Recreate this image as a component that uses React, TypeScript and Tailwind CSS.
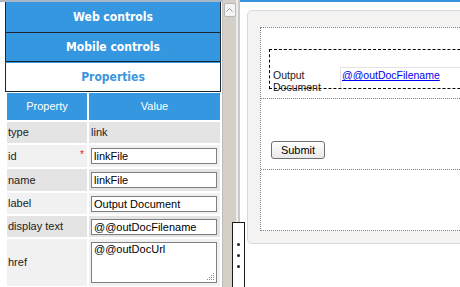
import type { ReactNode } from "react";

function Field({ value }: { value: string }) {
  return (
    <div className="h-[16px] w-[126px] border border-[#7f7f7f] bg-white pl-[2px] text-[11px] leading-[14px] text-black">
      {value}
    </div>
  );
}

function Row({
  label,
  h,
  light,
  req,
  children,
}: {
  label: string;
  h: string;
  light: boolean;
  req?: boolean;
  children: ReactNode;
}) {
  const bg = light ? "bg-[#f1f1f1]" : "bg-[#e4e4e4]";
  return (
    <>
      <div className={`${h} ${bg} relative flex items-center pl-[1px] text-[11px] text-[#222]`}>
        {label}
        {req && <span className="absolute right-[3px] top-[5px] text-[10px] leading-none text-[#e02020]">*</span>}
      </div>
      <div className={`${h} ${bg} flex items-center pl-[2px] text-[11px] text-[#222]`}>{children}</div>
    </>
  );
}

export default function App() {
  return (
    <div
      className="relative flex h-[287px] w-[460px] overflow-hidden bg-white"
      style={{ fontFamily: '"Liberation Sans", Arial, sans-serif' }}
    >
      {/* left: accordion + property grid */}
      <div className="flex w-[222px] shrink-0 flex-col">
        <div className="h-[2px] bg-[#a9b6c3]" />
        <div className="ml-[5px] w-[216px]" style={{ fontFamily: '"DejaVu Sans Condensed", "DejaVu Sans", sans-serif' }}>
          <div className="flex h-[31px] items-center justify-center border-x border-b border-[#1d2731] bg-[#3597e0] text-[12px] font-bold text-white">
            Web controls
          </div>
          <div className="flex h-[29px] items-center justify-center border-x border-b border-[#1d2731] bg-[#3597e0] text-[12px] font-bold text-white">
            Mobile controls
          </div>
          <div className="flex h-[30px] items-center justify-center border-x border-b border-t border-[#1d2731] border-t-[#3597e0] bg-white text-[12px] font-bold text-[#3a95dd]">
            Properties
          </div>
        </div>

        <div className="ml-[7px] mt-[1px] grid w-[213px] grid-cols-[80px_131px] gap-[2px]">
          <div className="flex h-[27px] items-center justify-center bg-[#3597e0] text-[11px] text-white">Property</div>
          <div className="flex h-[27px] items-center justify-center bg-[#3597e0] text-[11px] text-white">Value</div>

          <Row label="type" h="h-[21px]" light={false}>
            link
          </Row>
          <Row label="id" h="h-[22px]" light req>
            <Field value="linkFile" />
          </Row>
          <Row label="name" h="h-[22px]" light={false}>
            <Field value="linkFile" />
          </Row>
          <Row label="label" h="h-[21px]" light>
            <Field value="Output Document" />
          </Row>
          <Row label="display text" h="h-[21px]" light={false}>
            <Field value="@@outDocFilename" />
          </Row>
          <Row label="href" h="h-[47px]" light>
            <div className="relative h-[41px] w-[126px] border border-[#7f7f7f] bg-white pl-[2px] text-[11px] leading-[13px] text-black">
              @@outDocUrl
              <svg className="absolute bottom-[1px] right-[1px]" width="8" height="8" viewBox="0 0 8 8">
                <g fill="#8a8a8a">
                  <rect x="6" y="0" width="1" height="1" />
                  <rect x="4" y="2" width="1" height="1" />
                  <rect x="6" y="2" width="1" height="1" />
                  <rect x="2" y="4" width="1" height="1" />
                  <rect x="4" y="4" width="1" height="1" />
                  <rect x="6" y="4" width="1" height="1" />
                  <rect x="0" y="6" width="1" height="1" />
                  <rect x="2" y="6" width="1" height="1" />
                  <rect x="4" y="6" width="1" height="1" />
                  <rect x="6" y="6" width="1" height="1" />
                </g>
              </svg>
            </div>
          </Row>
        </div>
      </div>

      {/* scrollbar */}
      <div className="flex w-[18px] shrink-0">
        <div className="flex w-[14px] flex-col border-l border-[#bdbdbd] bg-[#d4d0c8] pt-[3px]">
          <div className="mx-auto flex h-[14px] w-[12px] items-center justify-center rounded-[2px] border border-[#b8b8b8] bg-[#f3f3f3]">
            <svg width="7" height="4" viewBox="0 0 7 4">
              <path d="M0.5 3.5 L3.5 0.5 L6.5 3.5" fill="none" stroke="#9a9a9a" strokeWidth="1" />
            </svg>
          </div>
        </div>
        <div className="w-[2px] bg-[#ececec]" />
        <div className="w-[2px] bg-[#c9c9c9]" />
      </div>

      {/* right: form designer canvas */}
      <div className="flex min-w-0 flex-1 flex-col">
        <div className="h-[2px] bg-[#3592dc]" />
        <div className="pl-[7px] pt-[8px]">
          <div className="h-[234px] w-[260px] rounded-[5px] border border-[#d9d9d9] bg-[#f4f3f1] pl-[12px] pt-[16px]">
            <div className="w-[240px] border-l border-t border-dotted border-[#808080] bg-white">
              <div className="h-[71px] border-b border-dotted border-[#808080] pl-[8px] pt-[21px]">
                <div className="flex h-[40px] border-y border-l border-dashed border-black">
                  <div className="mt-[19px] w-[70px] shrink-0 pl-[3px] text-[10.5px] leading-[12px] text-[#222]">
                    Output
                    <br />
                    Document
                  </div>
                  <div className="mt-[17px] h-[21px] flex-1 border-l border-t border-[#e2e2e2] pl-[1px] pt-[2px] text-[10.5px] leading-[11px]">
                    <span className="text-[#0000ee] underline">@@outDocFilename</span>
                  </div>
                </div>
              </div>
              <div className="flex h-[71px] items-start border-b border-dotted border-[#808080] pl-[10px] pt-[42px]">
                <button className="h-[18px] w-[54px] rounded-[3px] border border-[#707070] bg-gradient-to-b from-white to-[#e9e9e9] text-[11px] leading-[16px] text-black">
                  Submit
                </button>
              </div>
              <div className="h-[61px] border-b border-dotted border-[#808080]" />
            </div>
          </div>
        </div>
      </div>

      {/* splitter handle */}
      <div className="absolute left-[232px] top-[222px] flex h-[70px] w-[13px] flex-col items-center gap-[8px] border border-[#1a1a1a] bg-white pt-[20px]">
        <span className="h-[3px] w-[3px] rounded-full bg-[#222]" />
        <span className="h-[3px] w-[3px] rounded-full bg-[#222]" />
        <span className="h-[3px] w-[3px] rounded-full bg-[#222]" />
      </div>
    </div>
  );
}
